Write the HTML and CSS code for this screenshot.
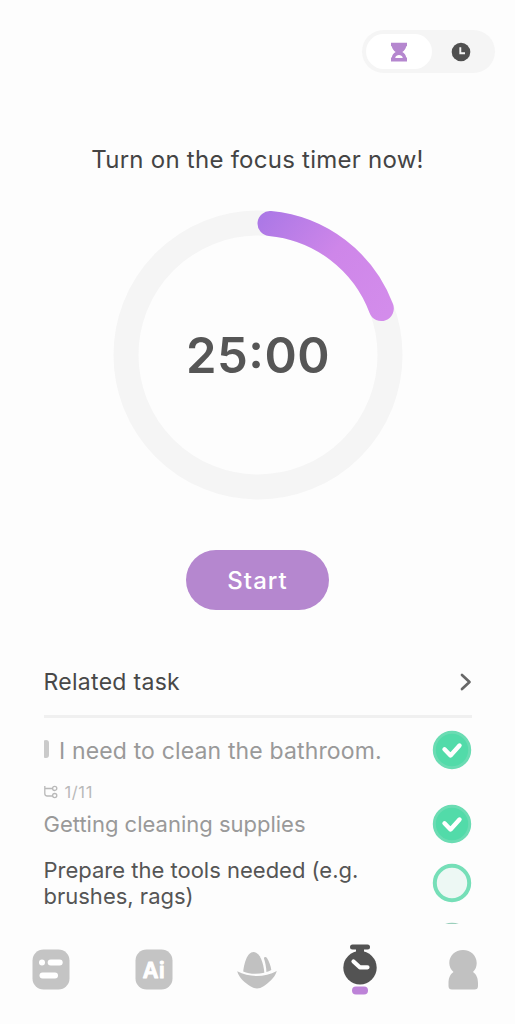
FILE: index.html
```html
<!DOCTYPE html>
<html lang="en">
<head>
<meta charset="utf-8">
<title>Focus timer</title>
<link rel="stylesheet" href="styles.css">
</head>
<body>
<div class="app">
  <header class="top">
    <div class="switch">
      <button class="mode mode-active" aria-label="Countdown">
        <svg width="18" height="20" viewBox="0 0 18 20"><path fill="#b587cf" fill-rule="evenodd" d="M1 .7h16v3.500h-.8c-.3 2.500-2 4.500-3.900 5.800 2.200 1.300 3.600 3.200 3.900 5.500h.8v4H1v-4h.8c.3-2.300 1.700-4.200 3.900-5.500C3.800 8.700 2.100 6.700 1.800 4.200H1zM5.200 15.900h7.600c-.5-2-2-2.900-3.800-2.900s-3.300.9-3.800 2.900z"/></svg>
      </button>
      <button class="mode" aria-label="Stopwatch">
        <svg width="20" height="20" viewBox="0 0 20 20"><circle cx="10" cy="10" r="9.300" fill="#505050"/><path d="M9.300 5.200v6h4.700" fill="none" stroke="#f5f5f5" stroke-width="1.900"/></svg>
      </button>
    </div>
  </header>

  <h1 class="headline">Turn on the focus timer now!</h1>

  <div class="dial">
    <svg class="ring" width="290" height="290" viewBox="0 0 290 290">
      <defs><linearGradient id="arc" gradientUnits="userSpaceOnUse" x1="145" y1="12" x2="268" y2="110"><stop offset="0" stop-color="#ac78e6"/><stop offset=".5" stop-color="#ce86e9"/><stop offset="1" stop-color="#d38ceb"/></linearGradient></defs>
      <circle cx="145" cy="145" r="132" fill="none" stroke="#f5f5f5" stroke-width="25"/>
      <path d="M157 13.500A132 132 0 0 1 268.300 98.500" fill="none" stroke="url(#arc)" stroke-width="25" stroke-linecap="round"/>
    </svg>
    <span class="time">25:00</span>
  </div>

  <button class="start">Start</button>

  <section class="tasks">
    <div class="tasks-head">
      <span class="tasks-title">Related task</span>
      <svg width="12" height="18" viewBox="0 0 12 18"><path d="M2 2l7.500 7L2 16" fill="none" stroke="#686868" stroke-width="2.700" stroke-linecap="round" stroke-linejoin="round"/></svg>
    </div>
    <div class="task main-task">
      <i class="bar"></i>
      <span class="task-name">I need to clean the bathroom.</span>
      <svg class="check" width="40" height="40" viewBox="0 0 40 40"><circle cx="20" cy="20" r="17.700" fill="#52dba9" stroke="#6bdcb3" stroke-width="3"/><path d="M12.500 19.300l6 6.200 9-10" fill="none" stroke="#fff" stroke-width="4.400" stroke-linecap="round" stroke-linejoin="round"/></svg>
    </div>
    <div class="meta">
      <svg width="14" height="14" viewBox="0 0 14 14"><g fill="none" stroke="#b9b9b9" stroke-width="1.300"><path d="M.8 1v7.500q0 2.500 2.500 2.500H8.600M.8 3.500H8.600"/><circle cx="10.700" cy="3.400" r="2.100"/><circle cx="10.700" cy="10.600" r="2.100"/></g></svg>
      <span>1/11</span>
    </div>
    <div class="task sub done">
      <span class="task-name">Getting cleaning supplies</span>
      <svg class="check" width="40" height="40" viewBox="0 0 40 40"><circle cx="20" cy="20" r="17.700" fill="#52dba9" stroke="#6bdcb3" stroke-width="3"/><path d="M12.500 19.300l6 6.200 9-10" fill="none" stroke="#fff" stroke-width="4.400" stroke-linecap="round" stroke-linejoin="round"/></svg>
    </div>
    <div class="task sub open">
      <span class="task-name">Prepare the tools needed (e.g.<br>brushes, rags)</span>
      <svg class="check" width="40" height="40" viewBox="0 0 40 40"><circle cx="20" cy="20" r="17.200" fill="#edf8f4" stroke="#76dfb8" stroke-width="4"/></svg>
    </div>
    <div class="task next">
      <svg class="check" width="40" height="40" viewBox="0 0 40 40"><circle cx="20" cy="20" r="17.200" fill="#edf8f4" stroke="#9bcfbc" stroke-width="4"/></svg>
    </div>
  </section>

  <nav class="tabs">
    <svg class="tab" width="40" height="56" viewBox="0 0 40 56"><rect x="1.500" y="14.500" width="37" height="40" rx="11" fill="#c4c4c4"/><g fill="#fff"><circle cx="11" cy="27.500" r="3"/><rect x="16.700" y="24.500" width="15" height="6" rx="3"/><rect x="8.500" y="37.500" width="18.500" height="6" rx="3"/></g></svg>
    <svg class="tab" width="40" height="56" viewBox="0 0 40 56"><rect x="1.500" y="14.500" width="37" height="40" rx="11" fill="#c4c4c4"/><text class="ai" x="8.800" y="43">Ai</text></svg>
    <svg class="tab" width="40" height="56" viewBox="0 0 40 56"><g fill="#c1c1c1"><path d="M6.200 36.500C7 29 10 17 16.500 17c6.500 0 10 11 10.800 20.700C20 39.500 12 39 6.200 36.500z"/><path d="M27 23.500c-.3-1.500 1.700-2.200 2.800-.8 2.500 4 4 8.300 4.500 12.300q-2.500 1.500-4.900 2.100c-.1-5-1-9-2.400-13.600z"/><path d="M.2 36.300C12.500 42.600 27.500 42.600 39.800 36c-2 7-8.500 12-13.200 15.300q-6.600 4.600-13.200 0C8.500 48 2 43.300.2 36.300z"/></g></svg>
    <svg class="tab" width="40" height="56" viewBox="0 0 40 56"><g fill="#535353"><rect x="10" y="9.500" width="20" height="5" rx="2.500"/><path d="M16 13h8v5h-8z"/><circle cx="20" cy="32.700" r="16.700"/></g><path d="M13.500 26.500l6.300 5.800h7.700" fill="none" stroke="#fff" stroke-width="4.200" stroke-linecap="round" stroke-linejoin="round"/><rect x="12" y="51.500" width="16" height="8" rx="4" fill="#bd83d8"/></svg>
    <svg class="tab" width="40" height="56" viewBox="0 0 40 56"><path fill="#c1c1c1" d="M20 15c8 0 13.700 5.700 13.700 13 0 3.500-1.200 6.500-3.700 9 3.500 2.500 5 6 5 11.500v2.500q0 3.500-3.500 3.500H9q-3.500 0-3.500-3.500v-2.500C5.500 43 7 39.500 10.500 37c-2.700-2.500-4.200-5.500-4.200-9C6.300 20.700 12 15 20 15z"/></svg>
  </nav>
</div>
</body>
</html>
```
FILE: styles.css
```css
* { box-sizing: border-box; }
body { margin: 0; background: #fdfdfd; font-family: Inter, "Liberation Sans", sans-serif; }
button { border: 0; padding: 0; font: inherit; }
svg { display: block; flex: none; }
.app { width: 515px; height: 1024px; display: flex; flex-direction: column; overflow: hidden; }
.top { display: flex; justify-content: flex-end; padding: 30px 20px 0 0; height: 73px; flex: none; }
.switch { display: flex; width: 133px; height: 43px; padding: 4px; border-radius: 22px; background: #f5f5f5; }
.mode { width: 66px; height: 35px; display: grid; place-items: center; background: none; border-radius: 18px; }
.mode + .mode { width: 58px; }
.mode-active { background: #fff; }
.headline { margin: 71px 0 0; height: 32px; flex: none; text-align: center; font-size: 24px; line-height: 32px; font-weight: 400; letter-spacing: .25px; color: #444; white-space: nowrap; }
.dial { width: 290px; height: 290px; flex: none; margin: 34px 0 0 112.500px; display: grid; place-items: center; }
.ring, .time { grid-area: 1 / 1; }
.time { font-size: 49px; line-height: 60px; font-weight: 600; font-feature-settings: "case"; letter-spacing: .5px; padding: 1px 0 0 1px; color: #565656; }
.start { width: 143px; height: 60px; flex: none; margin: 49.500px 0 0 186px; padding-top: 1px; border-radius: 30px; background: #b587cf; color: #fff; font-size: 24px; font-weight: 500; letter-spacing: 1px; }
.tasks { margin: 44px 43px 0 43.500px; height: 270px; flex: none; overflow: hidden; }
.tasks-head { display: flex; align-items: center; justify-content: space-between; height: 64px; padding-bottom: 4px; border-bottom: 3px solid #f0f0f0; }
.tasks-title { font-size: 23px; letter-spacing: .3px; color: #484848; }
.task { display: flex; align-items: center; }
.check { margin-left: auto; }
.main-task { height: 40px; margin-top: 12px; font-size: 23px; letter-spacing: .15px; color: #999; }
.main-task .task-name { padding-top: 2px; }
.bar { width: 6px; height: 18px; margin: -2px 10px 0 -.5px; border-radius: 3px; background: #cacaca; }
.meta { display: flex; align-items: center; gap: 7px; height: 20px; margin-top: 12px; font-size: 16.500px; letter-spacing: .6px; color: #b9b9b9; }
.sub { font-size: 22px; line-height: 26px; letter-spacing: 0; }
.done { height: 40px; margin-top: 2px; color: #999; }
.open { height: 54px; margin-top: 12px; color: #555; }
.next { margin-top: 12px; }
.tabs { display: flex; justify-content: space-between; height: 70px; padding: 11px 32px 0 31px; }
.tab { overflow: visible; }
.ai { font: 600 21.500px Inter, sans-serif; letter-spacing: .5px; fill: #fff; stroke: #fff; stroke-width: 1px; stroke-linejoin: round; }
```
